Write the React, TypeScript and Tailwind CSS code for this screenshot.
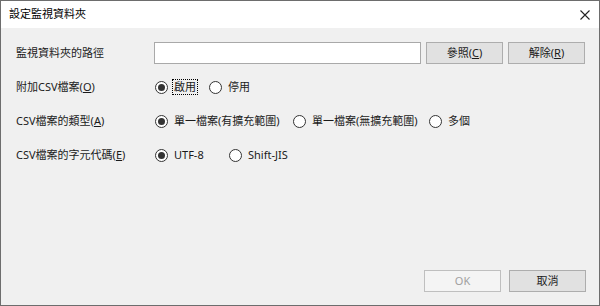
import React from "react";

const font = { fontFamily: '"Noto Sans", "Noto Sans CJK TC", sans-serif' };

function Radio({ checked, label, width, focus }: { checked?: boolean; label: React.ReactNode; width: string; focus?: boolean }) {
  return (
    <div className={`flex items-center ${width}`}>
      <div className="w-[13px] h-[13px] rounded-full border border-[#333333] bg-white flex items-center justify-center shrink-0">
        {checked && <div className="w-[7px] h-[7px] rounded-full bg-[#333333]" />}
      </div>
      <span className={`ml-[5px] px-[1px] leading-[14px] whitespace-nowrap ${focus ? "outline-1 outline-dotted outline-black" : ""}`}>
        {label}
      </span>
    </div>
  );
}

function Btn({ children, disabled }: { children: React.ReactNode; disabled?: boolean }) {
  return (
    <div
      className={`w-[77px] h-[22px] flex items-center justify-center border ${
        disabled ? "border-[#bfbfbf] bg-[#f4f4f4] text-[#a0a0a0]" : "border-[#adadad] bg-[#e1e1e1] text-[#1a1a1a]"
      }`}
    >
      {children}
    </div>
  );
}

export default function App() {
  return (
    <div className="w-[600px] h-[306px] border border-[#6d6d6d] bg-[#f0f0f0] flex flex-col text-[11px] text-[#1a1a1a]" style={font}>
      <div className="h-[27px] bg-white flex items-center pl-[8px] pr-[9px] shrink-0">
        <span className="text-[11px] text-black">設定監視資料夾</span>
        <svg className="ml-auto" width="10" height="10" viewBox="0 0 10 10">
          <path d="M0.5 0.5 L9.5 9.5 M9.5 0.5 L0.5 9.5" stroke="#222" strokeWidth="1.1" />
        </svg>
      </div>
      <div className="flex-1 flex flex-col pl-[15px] pr-[13px] pt-[14px] pb-[13px]">
        <div className="flex items-center h-[22px]">
          <div className="w-[138px]">監視資料夾的路徑</div>
          <div className="w-[267px] h-[22px] bg-white border border-[#a9a9a9]" />
          <div className="ml-[5px]">
            <Btn>
              參照(<span className="underline">C</span>)
            </Btn>
          </div>
          <div className="ml-[5px]">
            <Btn>
              解除(<span className="underline">R</span>)
            </Btn>
          </div>
        </div>
        <div className="flex items-center h-[22px] mt-[12px]">
          <div className="w-[139px]">
            附加CSV檔案(<span className="underline">O</span>)
          </div>
          <Radio checked label="啟用" width="w-[54px]" focus />
          <Radio label="停用" width="w-[54px]" />
        </div>
        <div className="flex items-center h-[22px] mt-[12px]">
          <div className="w-[139px]">
            CSV檔案的類型(<span className="underline">A</span>)
          </div>
          <Radio checked label="單一檔案(有擴充範圍)" width="w-[138px]" />
          <Radio label="單一檔案(無擴充範圍)" width="w-[136px]" />
          <Radio label="多個" width="w-[50px]" />
        </div>
        <div className="flex items-center h-[22px] mt-[12px]">
          <div className="w-[139px]">
            CSV檔案的字元代碼(<span className="underline">E</span>)
          </div>
          <Radio checked label="UTF-8" width="w-[74px]" />
          <Radio label="Shift-JIS" width="w-[74px]" />
        </div>
        <div className="mt-auto flex justify-end">
          <Btn disabled>OK</Btn>
          <div className="ml-[8px]">
            <Btn>取消</Btn>
          </div>
        </div>
      </div>
    </div>
  );
}
